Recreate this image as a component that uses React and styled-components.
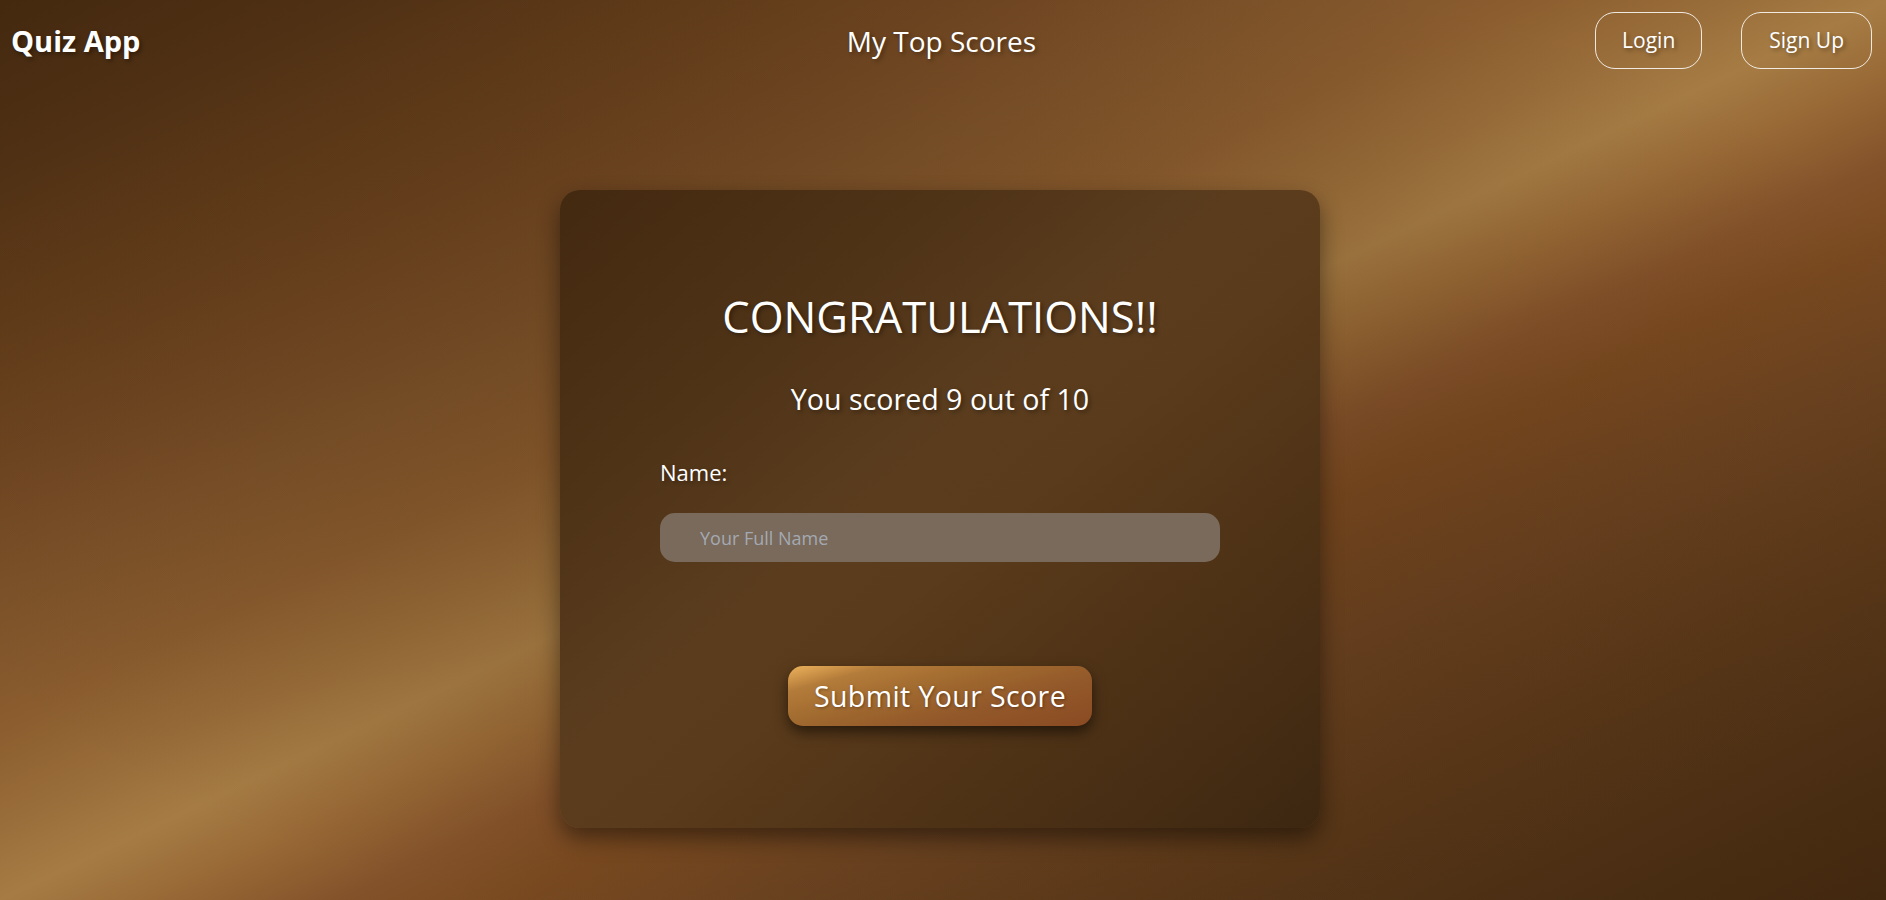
import React from 'react';
import styled, { createGlobalStyle } from 'styled-components';

const GlobalStyle = createGlobalStyle`
  html, body {
    margin: 0;
    padding: 0;
  }
  body {
    font-family: "Open Sans", "Noto Sans", sans-serif;
    color: #fff;
  }
  * {
    box-sizing: border-box;
  }
`;

const Page = styled.div`
  min-height: 100vh;
  display: flex;
  flex-direction: column;
  background:
    radial-gradient(
      ellipse farthest-corner at 50% 50%,
      rgba(45, 22, 5, 0.22) 0%,
      rgba(45, 22, 5, 0.1) 45%,
      rgba(45, 22, 5, 0) 80%
    ),
    linear-gradient(
      to bottom right,
      #44290f 0%,
      #4f3014 9%,
      #5e3a18 17%,
      #6d4420 25%,
      #7c5229 33%,
      #8a5c2e 40%,
      #9a6e3a 46%,
      #a67c44 50%,
      #996a36 54%,
      #84522a 59%,
      #7a4a20 63%,
      #6a4220 71%,
      #5a3818 80%,
      #4c2f14 90%,
      #42280f 100%
    );
`;

const NavBar = styled.nav`
  display: grid;
  grid-template-columns: 1fr auto 1fr;
  align-items: center;
  padding: 12px 14px 0 11px;
`;

const Logo = styled.div`
  font-size: 29px;
  font-weight: 700;
  text-shadow: 2px 2px 4px rgba(0, 0, 0, 0.4);
`;

const NavLink = styled.a`
  font-size: 28px;
  color: #fff;
  text-decoration: none;
  text-shadow: 2px 2px 4px rgba(0, 0, 0, 0.35);
`;

const AuthGroup = styled.div`
  display: flex;
  justify-content: flex-end;
  gap: 39px;
`;

const AuthButton = styled.button`
  font-family: inherit;
  font-size: 21px;
  line-height: 29px;
  color: #fff;
  background: transparent;
  border: 1px solid rgba(255, 255, 255, 0.85);
  border-radius: 20px;
  padding: 13px ${props => props.$px || 26}px;
  text-shadow: 2px 2px 4px rgba(0, 0, 0, 0.4);
  cursor: pointer;
`;

const Main = styled.main`
  display: flex;
  justify-content: center;
  padding: 121px 6px 0 0;
`;

const Card = styled.section`
  width: 760px;
  height: 638px;
  border-radius: 20px;
  background: linear-gradient(
    to bottom right,
    #432910 0%,
    #4f3317 25%,
    #5b3d1e 45%,
    #5a3b1b 55%,
    #4e3216 75%,
    #3d2711 100%
  );
  box-shadow: 0 10px 22px rgba(0, 0, 0, 0.45);
  display: flex;
  flex-direction: column;
  align-items: center;
  padding-top: 98px;
`;

const Title = styled.h1`
  margin: 0;
  font-size: 43.5px;
  line-height: 58px;
  font-weight: 400;
  text-shadow: 2px 2px 4px rgba(0, 0, 0, 0.4);
`;

const Score = styled.p`
  margin: 34px 0 0;
  font-size: 28.6px;
  line-height: 38px;
  text-shadow: 2px 2px 4px rgba(0, 0, 0, 0.4);
`;

const Field = styled.div`
  width: 560px;
  margin-top: 39px;
  display: flex;
  flex-direction: column;
  gap: 26px;
`;

const Label = styled.label`
  font-size: 22px;
  line-height: 30px;
  text-shadow: 2px 2px 4px rgba(0, 0, 0, 0.35);
`;

const NameInput = styled.input`
  width: 100%;
  height: 49px;
  border: none;
  outline: none;
  border-radius: 15px;
  background: #7a6a5b;
  padding: 0 40px;
  font-family: inherit;
  font-size: 18px;
  color: #fff;

  &::placeholder {
    color: #a3a9b3;
  }
`;

const SubmitButton = styled.button`
  margin-top: 104px;
  height: 60px;
  padding: 0 26px;
  border: none;
  border-radius: 15px;
  font-family: inherit;
  font-size: 28.5px;
  letter-spacing: 0.4px;
  color: #fff;
  background: linear-gradient(
    165deg,
    #eeb25c 0%,
    #b47c3a 18%,
    #a16a2f 40%,
    #93592a 65%,
    #8a4a22 100%
  );
  box-shadow: 0 6px 14px rgba(0, 0, 0, 0.55);
  text-shadow: 1px 1px 3px rgba(0, 0, 0, 0.35);
  cursor: pointer;
`;

export default function App() {
  return (
    <Page>
      <GlobalStyle />
      <NavBar>
        <Logo>Quiz App</Logo>
        <NavLink href="#">My Top Scores</NavLink>
        <AuthGroup>
          <AuthButton>Login</AuthButton>
          <AuthButton $px={27}>Sign Up</AuthButton>
        </AuthGroup>
      </NavBar>
      <Main>
        <Card>
          <Title>CONGRATULATIONS!!</Title>
          <Score>You scored 9 out of 10</Score>
          <Field>
            <Label htmlFor="name">Name:</Label>
            <NameInput id="name" placeholder="Your Full Name" />
          </Field>
          <SubmitButton>Submit Your Score</SubmitButton>
        </Card>
      </Main>
    </Page>
  );
}
